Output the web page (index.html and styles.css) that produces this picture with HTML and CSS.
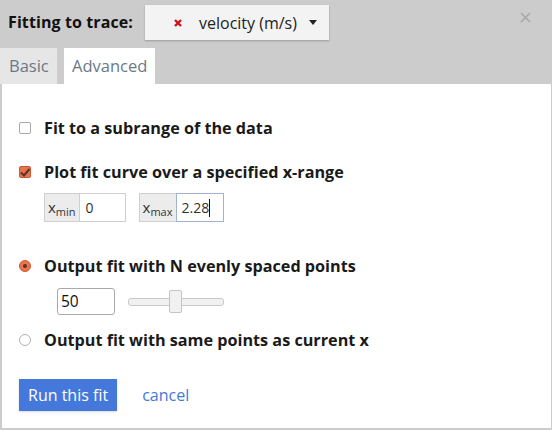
FILE: index.html
```html
<!DOCTYPE html>
<html>
<head>
<meta charset="utf-8">
<link rel="stylesheet" href="styles.css">
</head>
<body>
<div class="dialog">
  <div class="header">
    <div class="title">Fitting to trace:</div>
    <div class="dropdown">
      <svg class="marker" width="8" height="8" viewBox="0 0 8 8"><path d="M1 1L7 7M7 1L1 7" stroke="#d0111b" stroke-width="2.4"/></svg>
      <span class="dd-text">velocity (m/s)</span>
      <svg class="caret" width="8" height="5" viewBox="0 0 8 5"><path d="M0 0H8L4 5Z" fill="#222"/></svg>
    </div>
    <svg class="close" width="11" height="11" viewBox="0 0 11 11"><path d="M1 1L10 10M10 1L1 10" stroke="#a9a9a9" stroke-width="1.7"/></svg>
  </div>
  <div class="tabs">
    <div class="tab">Basic</div>
    <div class="tab active">Advanced</div>
  </div>
  <div class="panel">
    <div class="row row-first">
      <span class="check"></span>
      <span class="label">Fit to a subrange of the data</span>
    </div>
    <div class="row row-second">
      <span class="check checked">
        <svg width="10" height="9" viewBox="0 0 10 9"><path d="M1 4.5L4 7.5L9.5 1" stroke="#5b3226" stroke-width="2" fill="none"/></svg>
      </span>
      <span class="label">Plot fit curve over a specified x-range</span>
    </div>
    <div class="ranges">
      <div class="group">
        <span class="addon">x<sub>min</sub></span>
        <span class="field">0</span>
      </div>
      <div class="group">
        <span class="addon">x<sub>max</sub></span>
        <span class="field focused">2.28<span class="cursor"></span></span>
      </div>
    </div>
    <div class="row row-third">
      <span class="radio on"></span>
      <span class="label">Output fit with N evenly spaced points</span>
    </div>
    <div class="npoints">
      <span class="num">50</span>
      <div class="slider">
        <div class="track"></div>
        <div class="thumb"></div>
      </div>
    </div>
    <div class="row row-fourth">
      <span class="radio"></span>
      <span class="label">Output fit with same points as current x</span>
    </div>
    <div class="actions">
      <span class="btn">Run this fit</span>
      <span class="cancel">cancel</span>
    </div>
  </div>
</div>
</body>
</html>
```
FILE: styles.css
```css
html, body {
  margin: 0;
  padding: 0;
}
body {
  background: #cccccc;
  font-family: "Open Sans", "Liberation Sans", sans-serif;
  width: 552px;
  height: 430px;
  overflow: hidden;
}
.dialog {
  display: flex;
  flex-direction: column;
  height: 430px;
}
.header {
  height: 48px;
  display: flex;
  align-items: flex-start;
  position: relative;
}
.title {
  font-weight: 700;
  font-size: 16px;
  color: #111;
  margin: 10px 0 0 8px;
  line-height: 24px;
  letter-spacing: 0.1px;
}
.dropdown {
  margin: 5px 0 0 12px;
  width: 184px;
  height: 35px;
  background: #f3f3f3;
  box-shadow: 0 1px 2px rgba(0,0,0,0.25);
  display: flex;
  align-items: center;
  box-sizing: border-box;
  padding-left: 29px;
}
.marker {
  margin-right: 17px;
}
.dd-text {
  font-size: 16px;
  color: #222;
}
.caret {
  margin-left: 12px;
}
.close {
  position: absolute;
  left: 520px;
  top: 12px;
}
.tabs {
  display: flex;
  gap: 7px;
  height: 36px;
}
.tab {
  background: #e6e6e6;
  font-size: 16.5px;
  color: #6b7888;
  line-height: 36px;
  width: 57px;
  box-sizing: border-box;
  padding-left: 9px;
}
.tab.active {
  background: #ffffff;
  width: 91px;
  padding-left: 8px;
}
.panel {
  background: #ffffff;
  margin: 0 1px 2px 2px;
  flex: 1;
  display: flex;
  flex-direction: column;
  padding-left: 17px;
}
.row {
  display: flex;
  align-items: center;
  height: 22px;
}
.row-first { margin-top: 33px; }
.row-second { margin-top: 22px; }
.row-third { margin-top: 33px; }
.row-fourth { margin-top: 14px; }
.label {
  font-size: 16.2px;
  font-weight: 700;
  color: #1a1a1a;
  margin-left: 13px;
}
.check {
  width: 12px;
  height: 12px;
  box-sizing: border-box;
  border: 1px solid #a9a9a9;
  border-radius: 2px;
  background: #fff;
  display: flex;
  align-items: center;
  justify-content: center;
}
.check.checked {
  background: #e8744d;
  border-color: #c95a35;
}
.radio {
  width: 12px;
  height: 12px;
  box-sizing: border-box;
  border: 1px solid #b0b0b0;
  border-radius: 50%;
  background: #fff;
  position: relative;
}
.radio.on {
  background: #e8744d;
  border-color: #c95a35;
}
.radio.on::after {
  content: "";
  position: absolute;
  left: 3px;
  top: 3px;
  width: 4px;
  height: 4px;
  border-radius: 50%;
  background: #6b2f1c;
}
.ranges {
  display: flex;
  gap: 13px;
  margin: 10px 0 0 25px;
}
.group {
  display: flex;
  height: 29px;
}
.addon {
  background: #ececec;
  border: 1px solid #cfcfcf;
  border-right: none;
  font-size: 15px;
  color: #333;
  line-height: 27px;
  padding: 0 3px 0 3px;
}
.addon sub {
  font-size: 11px;
  vertical-align: -3px;
  line-height: 0;
}
.field {
  border: 1px solid #cfcfcf;
  width: 47px;
  box-sizing: border-box;
  font-size: 14px;
  color: #333;
  line-height: 27px;
  padding-left: 6px;
  display: flex;
  align-items: center;
}
.field.focused {
  border-color: #9fb2cf;
  width: 48px;
  padding-left: 5px;
}
.cursor {
  display: inline-block;
  width: 1px;
  height: 18px;
  background: #111;
}
.npoints {
  display: flex;
  align-items: center;
  margin: 11px 0 0 38px;
  gap: 13px;
}
.num {
  width: 58px;
  height: 27px;
  box-sizing: border-box;
  border: 1px solid #aaaaaa;
  border-radius: 3px;
  font-size: 15.5px;
  color: #111;
  line-height: 25px;
  padding-left: 3px;
}
.slider {
  width: 96px;
  height: 24px;
  position: relative;
}
.track {
  position: absolute;
  left: 0;
  right: 0;
  top: 8px;
  height: 8px;
  box-sizing: border-box;
  border: 1px solid #c8c8c8;
  border-radius: 3px;
  background: #f1f1f1;
}
.thumb {
  position: absolute;
  left: 41px;
  top: 0;
  width: 13px;
  height: 23px;
  box-sizing: border-box;
  border: 1px solid #c4c4c4;
  border-radius: 2px;
  background: #f1f1f1;
}
.actions {
  display: flex;
  align-items: center;
  margin-top: 28px;
  gap: 25px;
}
.btn {
  background: #4479db;
  color: #fff;
  font-size: 16px;
  height: 32px;
  line-height: 32px;
  padding: 0 9px;
  box-shadow: 0 1px 2px rgba(0,0,0,0.15);
}
.cancel {
  color: #4479db;
  font-size: 16px;
}
```
